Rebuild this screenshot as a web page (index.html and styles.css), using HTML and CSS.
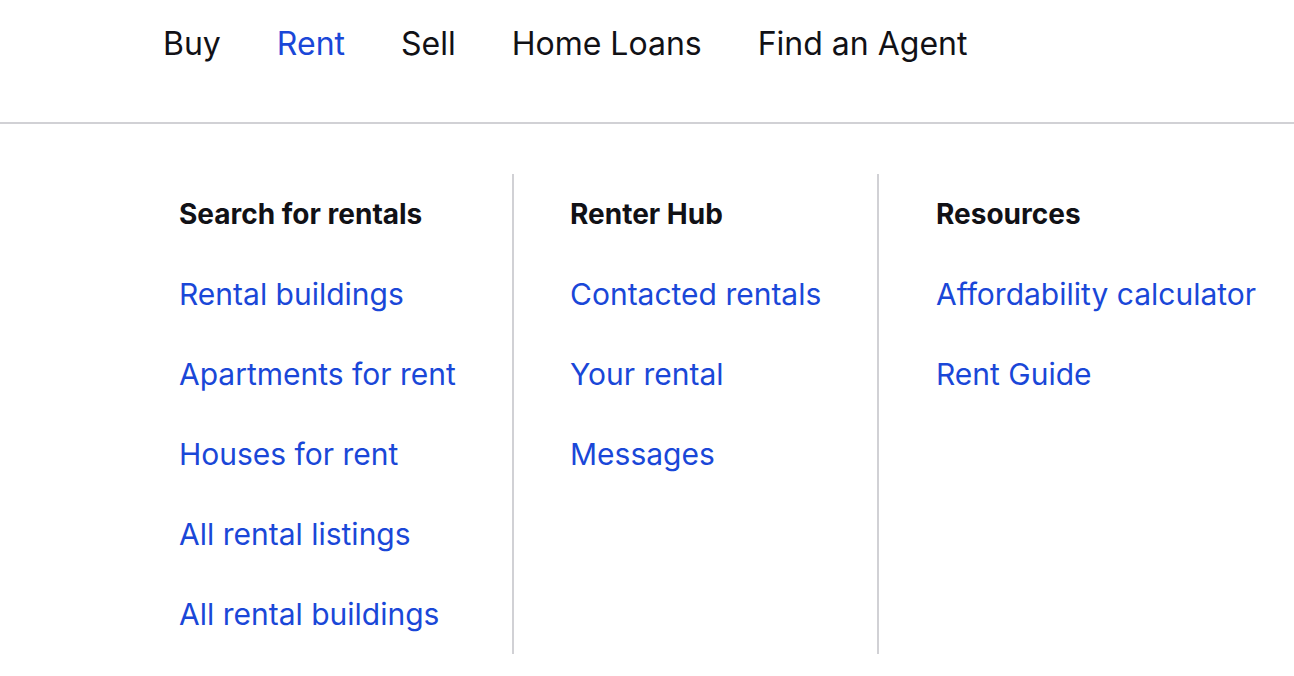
FILE: index.html
```html
<!DOCTYPE html>
<html lang="en">
<head>
<meta charset="utf-8">
<title>Rent menu</title>
<link rel="stylesheet" href="styles.css">
</head>
<body>
<header class="topbar">
  <nav class="nav">
    <a class="nav-item" href="#">Buy</a>
    <a class="nav-item active" href="#">Rent</a>
    <a class="nav-item" href="#">Sell</a>
    <a class="nav-item" href="#">Home Loans</a>
    <a class="nav-item" href="#">Find an Agent</a>
  </nav>
</header>
<section class="menu">
  <div class="col col-first">
    <h3 class="col-title">Search for rentals</h3>
    <a class="col-link" href="#">Rental buildings</a>
    <a class="col-link" href="#">Apartments for rent</a>
    <a class="col-link" href="#">Houses for rent</a>
    <a class="col-link" href="#">All rental listings</a>
    <a class="col-link" href="#">All rental buildings</a>
  </div>
  <div class="col col-second">
    <h3 class="col-title">Renter Hub</h3>
    <a class="col-link" href="#">Contacted rentals</a>
    <a class="col-link" href="#">Your rental</a>
    <a class="col-link" href="#">Messages</a>
  </div>
  <div class="col col-third">
    <h3 class="col-title">Resources</h3>
    <a class="col-link" href="#">Affordability calculator</a>
    <a class="col-link" href="#">Rent Guide</a>
  </div>
</section>
</body>
</html>
```
FILE: styles.css
```css
html, body {
  margin: 0;
  padding: 0;
  background: #ffffff;
}
body {
  font-family: Inter, "Noto Sans", sans-serif;
  color: #111116;
}
a {
  text-decoration: none;
}
.topbar {
  height: 122px;
  border-bottom: 2px solid #d1d1d5;
  box-sizing: content-box;
}
.nav {
  display: flex;
  gap: 56px;
  padding-left: 163px;
  padding-top: 25px;
}
.nav-item {
  font-size: 32px;
  color: #111116;
  line-height: 37px;
}
.nav-item.active {
  color: #1a47d8;
}
.menu {
  display: flex;
  padding-left: 179px;
  margin-top: 50px;
}
.col {
  display: flex;
  flex-direction: column;
  box-sizing: border-box;
}
.col-first {
  width: 333px;
}
.col-second {
  width: 365px;
  border-left: 2px solid #d1d1d5;
  padding-left: 56px;
}
.col-third {
  border-left: 2px solid #d1d1d5;
  padding-left: 57px;
}
.col-title {
  margin: 0;
  font-size: 28px;
  font-weight: 700;
  line-height: 80px;
  color: #111116;
}
.col-link {
  font-size: 30px;
  line-height: 80px;
  color: #1a47d8;
}
```
